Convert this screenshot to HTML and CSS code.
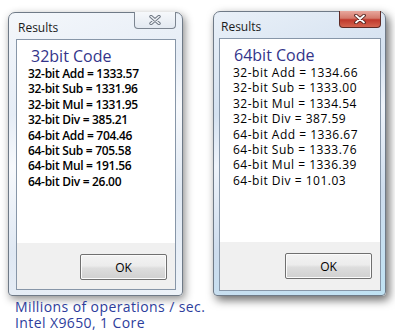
FILE: index.html
```html
<!DOCTYPE html>
<html lang="en">
<head>
    <meta charset="UTF-8">
    <meta name="viewport" content="width=device-width, initial-scale=1.0">
    <link rel="stylesheet" href="styles.css">
    <title>Results</title>
</head>
<body>
    <div class="desk">
        <div class="windows">
            <div class="window inactive">
                <div class="titlebar">
                    <span class="title">Results</span>
                    <div class="close">
                        <svg width="12" height="10" viewBox="0 0 12 10">
                            <path d="M2 1.5 L10 8.5 M10 1.5 L2 8.5" stroke="#6b7480" stroke-width="3.4" stroke-linecap="round"/>
                            <path d="M2 1.5 L10 8.5 M10 1.5 L2 8.5" stroke="#eef1f5" stroke-width="1.6" stroke-linecap="round"/>
                        </svg>
                    </div>
                </div>
                <div class="client">
                    <div class="content bold">
                        <div class="heading">32bit Code</div>
                        <div class="line">32-bit Add = 1333.57</div>
                        <div class="line">32-bit Sub = 1331.96</div>
                        <div class="line">32-bit Mul = 1331.95</div>
                        <div class="line">32-bit Div = 385.21</div>
                        <div class="line">64-bit Add = 704.46</div>
                        <div class="line">64-bit Sub = 705.58</div>
                        <div class="line">64-bit Mul = 191.56</div>
                        <div class="line">64-bit Div = 26.00</div>
                    </div>
                    <div class="footer">
                        <button class="ok">OK</button>
                    </div>
                </div>
            </div>

            <div class="window active">
                <div class="titlebar">
                    <span class="title">Results</span>
                    <div class="close">
                        <svg width="12" height="10" viewBox="0 0 12 10">
                            <path d="M2 1.5 L10 8.5 M10 1.5 L2 8.5" stroke="#4a1d18" stroke-width="3.6" stroke-linecap="round"/>
                            <path d="M2 1.5 L10 8.5 M10 1.5 L2 8.5" stroke="#ffffff" stroke-width="1.8" stroke-linecap="round"/>
                        </svg>
                    </div>
                </div>
                <div class="client">
                    <div class="content">
                        <div class="heading">64bit Code</div>
                        <div class="line">32-bit Add = 1334.66</div>
                        <div class="line">32-bit Sub = 1333.00</div>
                        <div class="line">32-bit Mul = 1334.54</div>
                        <div class="line">32-bit Div = 387.59</div>
                        <div class="line">64-bit Add = 1336.67</div>
                        <div class="line">64-bit Sub = 1333.76</div>
                        <div class="line">64-bit Mul = 1336.39</div>
                        <div class="line">64-bit Div = 101.03</div>
                    </div>
                    <div class="footer">
                        <button class="ok">OK</button>
                    </div>
                </div>
            </div>
        </div>

        <div class="caption">
            <div>Millions of operations / sec.</div>
            <div>Intel X9650, 1 Core</div>
        </div>
    </div>
</body>
</html>
```

FILE: styles.css
```css
body {
    margin: 0;
    background-color: #ffffff;
    font-family: "Open Sans", "Noto Sans", sans-serif;
}

.desk {
    width: 395px;
    height: 336px;
    overflow: hidden;
}

.windows {
    display: flex;
    align-items: flex-start;
    padding: 11px 0 0 8px;
    gap: 30px;
}

.window {
    box-sizing: border-box;
    display: flex;
    flex-direction: column;
    border: 1px solid #6f7a87;
    border-radius: 7px 7px 4px 4px;
    background: linear-gradient(160deg, #f4f7fb 0%, #e6edf6 30%, #f7f9fc 45%, #dfe8f3 70%, #eef3f9 100%);
    box-shadow: 2px 3px 8px rgba(0, 0, 0, 0.45);
}

.window.inactive {
    width: 175px;
    height: 284px;
    margin-top: 1px;
    padding: 0 6px 5px 7px;
}

.window.active {
    width: 173px;
    height: 285px;
    padding: 0 4px 4px 5px;
    background: linear-gradient(160deg, #e9f0f8 0%, #d4e1f0 30%, #eef3fa 45%, #cddced 70%, #bfe2f3 100%);
    box-shadow: 3px 4px 10px rgba(0, 0, 0, 0.6);
}

.titlebar {
    display: flex;
    justify-content: space-between;
    align-items: flex-start;
    height: 26px;
}

.title {
    font-size: 12px;
    color: #1b1b1b;
    margin-top: 6px;
    margin-left: 2px;
}

.close {
    box-sizing: border-box;
    width: 42px;
    height: 17px;
    margin-top: -1px;
    border: 1px solid #7c8591;
    border-top: none;
    border-radius: 0 0 4px 4px;
    display: flex;
    justify-content: center;
    align-items: center;
}

.inactive .close {
    background: linear-gradient(#f6f8fb, #e3e9f1);
}

.active .close {
    border-color: #5e2a25;
    background: linear-gradient(#e8a79d 0%, #d47a6c 45%, #c0392c 55%, #d4644f 100%);
}

.client {
    flex: 1;
    display: flex;
    flex-direction: column;
    border: 1px solid #8796a8;
    background-color: #f0f0f0;
}

.content {
    height: 203px;
    background-color: #ffffff;
    padding: 6px 0 0 11px;
    box-sizing: border-box;
    color: #000000;
}

.heading {
    font-size: 16px;
    color: #33348a;
    margin: 0 0 0 3px;
    line-height: 20px;
}

.line {
    font-size: 12px;
    line-height: 15.4px;
    white-space: nowrap;
}

.bold .line {
    font-weight: 600;
    letter-spacing: -0.3px;
}

.active .content {
    padding-left: 11px;
}

.active .line {
    letter-spacing: 0.5px;
    margin-left: 2px;
}

.footer {
    flex: 1;
    display: flex;
    justify-content: flex-end;
    align-items: flex-start;
    padding: 11px 8px 0 0;
}

.ok {
    width: 87px;
    height: 26px;
    border: 1px solid #707070;
    border-radius: 2px;
    background: linear-gradient(#f3f3f3 0%, #ececec 45%, #dddddd 55%, #d0d0d0 100%);
    box-shadow: inset 0 0 0 1px #fbfbfb;
    font-family: "Open Sans", sans-serif;
    font-size: 12px;
    color: #000000;
    padding: 0;
}

.caption {
    margin: 3px 0 0 15px;
    font-size: 14px;
    line-height: 16px;
    letter-spacing: 0.4px;
    color: #2d3d9c;
}
```
